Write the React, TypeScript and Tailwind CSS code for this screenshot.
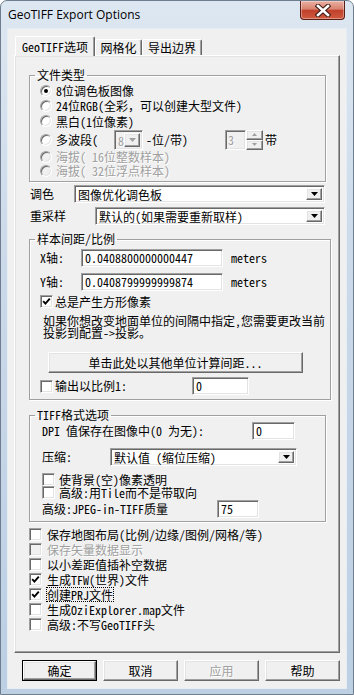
import React from "react";

const sunken =
  "border border-t-[#a0a0a0] border-l-[#a0a0a0] border-r-white border-b-white shadow-[inset_1px_1px_0_#696969,inset_-1px_-1px_0_#e3e3e3]";
const raised =
  "border border-t-white border-l-white border-r-[#696969] border-b-[#696969] shadow-[inset_-1px_-1px_0_#a0a0a0,inset_1px_1px_0_#e3e3e3]";
const grayText = "text-[#a0a0a0] [text-shadow:1px_1px_0_#ffffff]";

const Radio = ({ checked = false, disabled = false }: { checked?: boolean; disabled?: boolean }) => (
  <span
    className={`w-[12px] h-[12px] shrink-0 rounded-full flex items-center justify-center ${sunken} ${
      disabled ? "bg-[#f0f0f0]" : "bg-white"
    }`}
  >
    {checked && <span className="w-[4px] h-[4px] rounded-full bg-black" />}
  </span>
);

const Check = ({ checked = false, disabled = false }: { checked?: boolean; disabled?: boolean }) => (
  <span
    className={`w-[13px] h-[13px] shrink-0 flex items-center justify-center ${sunken} ${
      disabled ? "bg-[#f0f0f0]" : "bg-white"
    }`}
  >
    {checked && (
      <svg width="9" height="9" viewBox="0 0 9 9">
        <path d="M1.2 4.2 L3.4 6.6 L7.8 1.6" stroke="#000" strokeWidth="1.9" fill="none" />
      </svg>
    )}
  </span>
);

const Arrow = ({ disabled = false }: { disabled?: boolean }) => (
  <span className={`w-[16px] h-full shrink-0 flex items-center justify-center bg-[#f0f0f0] ${raised}`}>
    <svg width="7" height="4" viewBox="0 0 7 4">
      <path d="M0 0h7L3.5 4z" fill={disabled ? "#a0a0a0" : "#000"} />
    </svg>
  </span>
);

const Combo = ({ value, w }: { value: string; w: string }) => (
  <div className={`${w} h-[18px] flex items-stretch bg-white p-[2px] ${sunken}`}>
    <span className="flex-1 pl-[1px] leading-[14px] whitespace-nowrap">{value}</span>
    <Arrow />
  </div>
);

const Field = ({ value, w }: { value: string; w: string }) => (
  <div className={`${w} h-[18px] bg-white pl-[3px] leading-[16px] whitespace-nowrap ${sunken}`}>{value}</div>
);

const Group = ({ title, children, className = "" }: { title: string; children: React.ReactNode; className?: string }) => (
  <fieldset
    className={`w-[297px] border border-[#a0a0a0] shadow-[inset_1px_1px_0_#ffffff,1px_1px_0_#ffffff] px-[5px] ${className}`}
  >
    <legend className="px-[2px] leading-[14px]">{title}</legend>
    {children}
  </fieldset>
);

const Btn = ({ label, isDefault = false, disabled = false }: { label: string; isDefault?: boolean; disabled?: boolean }) => (
  <div className={`w-[75px] h-[21px] ${isDefault ? "border border-black" : ""}`}>
    <div
      className={`w-full h-full flex items-center justify-center bg-[#f0f0f0] ${raised} ${
        disabled ? grayText : ""
      }`}
    >
      {label}
    </div>
  </div>
);

export default function App() {
  return (
    <div className="w-[354px] h-[695px] overflow-hidden rounded-t-[7px] border border-[#6f7e8e] bg-[linear-gradient(180deg,#dde7f1_0%,#ccdaea_35%,#bccfe3_100%)] flex flex-col text-[12px] leading-[14px] text-black font-['Noto_Sans_Mono_CJK_SC','Noto_Sans_CJK_SC',sans-serif]">
      {/* title bar */}
      <div className="h-[27px] shrink-0 flex justify-between items-start">
        <span className="pl-[7px] pt-[6px] leading-[16px] text-[12px] text-black font-['Open_Sans',sans-serif]">
          GeoTIFF Export Options
        </span>
        <div className="mr-[8px] w-[45px] h-[19px] rounded-b-[4px] border border-t-0 border-[#5a1e16] bg-[linear-gradient(180deg,#eab0a3_0%,#d9826f_45%,#c0412c_52%,#cf5a3e_100%)] shadow-[inset_0_0_0_1px_rgba(255,255,255,0.35)] flex items-center justify-center">
          <svg width="16" height="13" viewBox="0 0 16 13">
            <path d="M3 2 L13 11 M13 2 L3 11" stroke="#3b1a14" strokeWidth="4.6" strokeLinecap="square" />
            <path d="M3 2 L13 11 M13 2 L3 11" stroke="#ffffff" strokeWidth="2.6" strokeLinecap="square" />
          </svg>
        </div>
      </div>

      {/* client area */}
      <div className="mx-[6px] h-[661px] shrink-0 bg-[#f0f0f0] border border-[#e6edf4] flex flex-col">
        {/* tabs */}
        <div className="flex items-end h-[19px] mt-[7px] ml-[7px]">
          <div className="relative z-10 w-[80px] h-[20px] -mb-[1px] bg-[#f0f0f0] rounded-t-[2px] border border-b-0 border-t-white border-l-white border-r-[#696969] shadow-[inset_-1px_0_0_#a0a0a0] flex items-center justify-center">
            GeoTIFF选项
          </div>
          <div className="w-[47px] h-[16px] bg-[#f0f0f0] rounded-t-[2px] border border-b-0 border-t-white border-l-white border-r-[#696969] shadow-[inset_-1px_0_0_#a0a0a0] flex items-center justify-center">
            网格化
          </div>
          <div className="w-[60px] h-[16px] bg-[#f0f0f0] rounded-t-[2px] border border-b-0 border-t-white border-l-white border-r-[#696969] shadow-[inset_-1px_0_0_#a0a0a0] flex items-center justify-center">
            导出边界
          </div>
        </div>

        {/* tab panel */}
        <div className={`ml-[6px] w-[326px] h-[598px] bg-[#f0f0f0] pl-[14px] pt-[12px] ${raised}`}>
          <Group title="文件类型">
            <div className="pl-[5px] pt-[1px] pb-[3px]">
              <div className="flex items-center h-[15px] gap-[4px]">
                <Radio checked />
                <span className="leading-[13px]">8位调色板图像</span>
              </div>
              <div className="flex items-center h-[15px] gap-[4px]">
                <Radio />
                <span className="leading-[13px]">24位RGB(全彩，可以创建大型文件)</span>
              </div>
              <div className="flex items-center h-[16px] gap-[4px]">
                <Radio />
                <span className="leading-[13px]">黑白(1位像素)</span>
              </div>
              <div className="flex items-center h-[21px]">
                <Radio />
                <span className="ml-[4px] w-[58px]">多波段(</span>
                <div className={`w-[29px] h-[20px] flex items-stretch bg-[#f0f0f0] p-[2px] ${sunken}`}>
                  <span className={`flex-1 pl-[1px] leading-[16px] ${grayText}`}>8</span>
                  <Arrow disabled />
                </div>
                <span className="ml-[3px] w-[79px]">-位/带)</span>
                <div className={`w-[21px] h-[20px] bg-[#f0f0f0] pl-[2px] leading-[18px] ${sunken} ${grayText}`}>3</div>
                <div className="w-[17px] h-[20px] flex flex-col">
                  <span className={`h-[10px] flex items-center justify-center bg-[#f0f0f0] ${raised}`}>
                    <svg width="5" height="3" viewBox="0 0 5 3">
                      <path d="M0 3h5L2.5 0z" fill="#a0a0a0" />
                    </svg>
                  </span>
                  <span className={`h-[10px] flex items-center justify-center bg-[#f0f0f0] ${raised}`}>
                    <svg width="5" height="3" viewBox="0 0 5 3">
                      <path d="M0 0h5L2.5 3z" fill="#a0a0a0" />
                    </svg>
                  </span>
                </div>
                <span className="ml-[2px]">带</span>
              </div>
              <div className="flex items-center h-[13px] gap-[4px]">
                <Radio disabled />
                <span className={`leading-[13px] ${grayText}`}>海拔( 16位整数样本)</span>
              </div>
              <div className="flex items-center h-[15px] gap-[4px]">
                <Radio disabled />
                <span className={`leading-[13px] ${grayText}`}>海拔( 32位浮点样本)</span>
              </div>
            </div>
          </Group>

          <div className="flex items-center h-[18px] mt-[3px]">
            <span className="ml-[1px] w-[44px]">调色</span>
            <Combo value="图像优化调色板" w="w-[251px]" />
          </div>
          <div className="flex items-center h-[18px] mt-[4px]">
            <span className="ml-[1px] w-[65px]">重采样</span>
            <Combo value="默认的(如果需要重新取样)" w="w-[230px]" />
          </div>

          <Group title="样本间距/比例" className="mt-[7px]">
            <div className="pl-[5px] pb-[4px]">
              <div className="flex items-center h-[18px] mt-[3px]">
                <span className="w-[41px]">X轴:</span>
                <Field value="0.0408800000000447" w="w-[142px]" />
                <span className="ml-[8px]">meters</span>
              </div>
              <div className="flex items-center h-[18px] mt-[6px]">
                <span className="w-[41px]">Y轴:</span>
                <Field value="0.0408799999999874" w="w-[142px]" />
                <span className="ml-[8px]">meters</span>
              </div>
              <div className="flex items-center h-[13px] mt-[4px] gap-[2px]">
                <Check checked />
                <span className="leading-[13px]">总是产生方形像素</span>
              </div>
              <div className="mt-[7px] ml-[3px] leading-[12px] whitespace-nowrap">
                如果你想改变地面单位的间隔中指定,您需要更改当前
                <br />
                投影到配置-&gt;投影。
              </div>
              <div className={`mt-[13px] ml-[8px] w-[255px] h-[21px] flex items-center justify-center bg-[#f0f0f0] ${raised}`}>
                单击此处以其他单位计算间距...
              </div>
              <div className="flex items-center h-[18px] mt-[4px]">
                <Check />
                <span className="ml-[2px] w-[137px]">输出以比例1:</span>
                <Field value="0" w="w-[57px]" />
              </div>
            </div>
          </Group>

          <Group title="TIFF格式选项" className="mt-[8px]">
            <div className="pl-[7px] pb-[3px]">
              <div className="flex items-center h-[18px]">
                <span className="w-[210px]">DPI 值保存在图像中(0 为无):</span>
                <Field value="0" w="w-[43px]" />
              </div>
              <div className="flex items-center h-[18px] mt-[8px]">
                <span className="w-[68px]">压缩:</span>
                <Combo value="默认值 (缩位压缩)" w="w-[187px]" />
              </div>
              <div className="flex items-center h-[13px] mt-[7px] gap-[4px]">
                <Check />
                <span className="leading-[13px]">使背景(空)像素透明</span>
              </div>
              <div className="flex items-center h-[13px] gap-[4px]">
                <Check />
                <span className="leading-[13px]">高级:用Tile而不是带取向</span>
              </div>
              <div className="flex items-center h-[18px] mt-[1px]">
                <span className="w-[175px]">高级:JPEG-in-TIFF质量</span>
                <Field value="75" w="w-[42px]" />
              </div>
            </div>
          </Group>

          <div className="mt-[5px] flex flex-col">
            {[
              { t: "保存地图布局(比例/边缘/图例/网格/等)" },
              { t: "保存矢量数据显示", d: true },
              { t: "以小差距值插补空数据" },
              { t: "生成TFW(世界)文件", c: true },
              { t: "创建PRJ文件", c: true, f: true },
              { t: "生成OziExplorer.map文件" },
              { t: "高级:不写GeoTIFF头" },
            ].map((r) => (
              <div key={r.t} className="flex items-center h-[15px] gap-[4px]">
                <Check checked={!!r.c} disabled={!!r.d} />
                <span
                  className={`leading-[13px] ${r.d ? grayText : ""} ${
                    r.f ? "border border-dotted border-black" : "border border-transparent"
                  }`}
                >
                  {r.t}
                </span>
              </div>
            ))}
          </div>
        </div>

        {/* dialog buttons */}
        <div className="flex gap-[6px] mt-[7px] ml-[14px]">
          <Btn label="确定" isDefault />
          <Btn label="取消" />
          <Btn label="应用" disabled />
          <Btn label="帮助" />
        </div>
      </div>
    </div>
  );
}
